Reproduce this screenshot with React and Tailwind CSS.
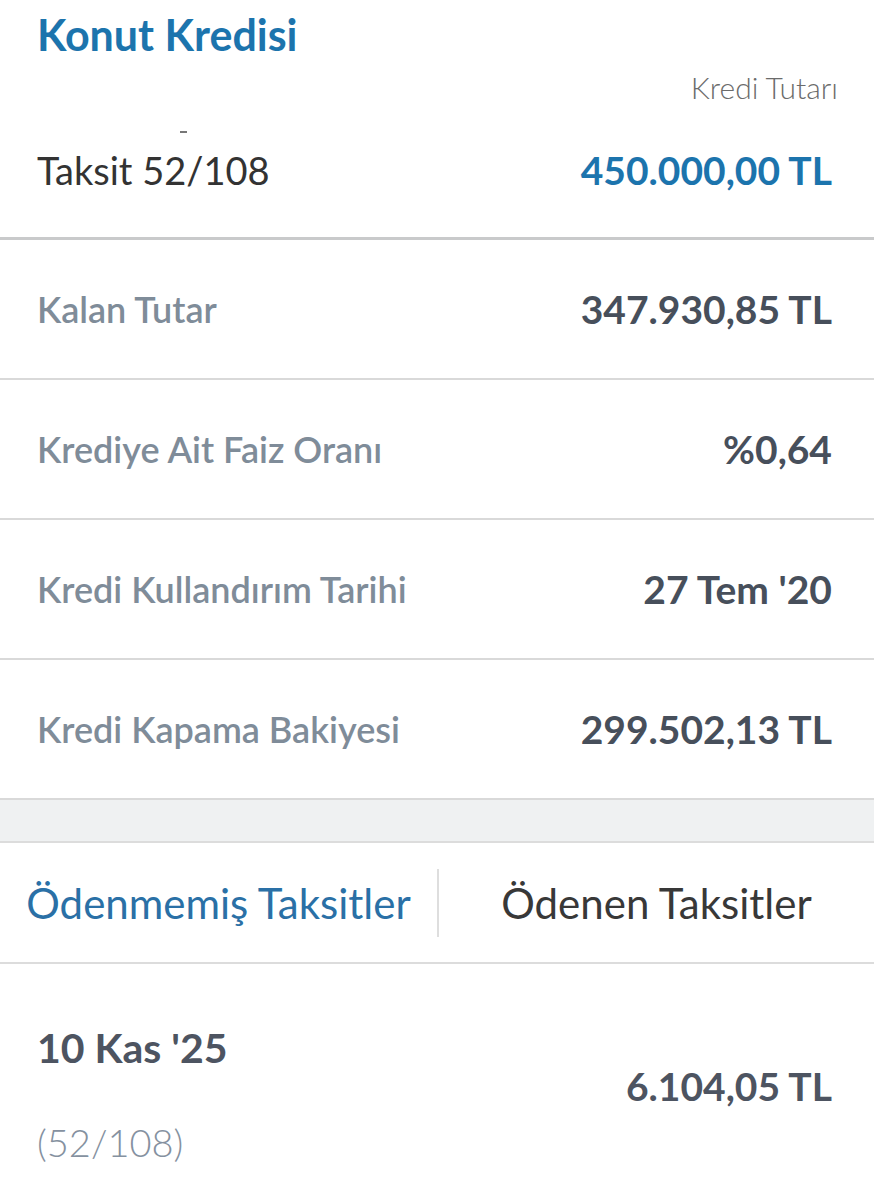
import React from "react";

const rows = [
  { label: "Kalan Tutar", value: "347.930,85 TL" },
  { label: "Krediye Ait Faiz Oranı", value: "%0,64" },
  { label: "Kredi Kullandırım Tarihi", value: "27 Tem '20" },
  { label: "Kredi Kapama Bakiyesi", value: "299.502,13 TL" },
];

const font = { fontFamily: "'Source Sans Pro', Lato, 'Noto Sans', sans-serif" };

export default function App() {
  return (
    <div className="w-[874px] h-[1200px] bg-white overflow-hidden" style={font}>
      {/* header */}
      <div className="h-[240px] border-b-[3px] border-[#c9cacb] pl-[37px] pr-[42px] relative">
        <h1 className="pt-[10px] text-[43px] leading-[50px] font-bold text-[#1c74ad]">Konut Kredisi</h1>
        <div className="mt-[9px] flex justify-end">
          <span className="text-[30px] leading-[36px] font-light text-[#6b6b6b] mr-[-6px]">Kredi Tutarı</span>
        </div>
        <div className="mt-[43px] flex items-center justify-between">
          <span className="text-[38px] leading-[44px] text-[#333333]">Taksit 52/108</span>
          <span className="text-[39px] leading-[44px] font-bold text-[#1c74ad]">450.000,00 TL</span>
        </div>
        <span className="absolute left-[180px] top-[131px] w-[7px] h-[2px] bg-[#777]" />
      </div>

      {rows.map((r) => (
        <div key={r.label} className="h-[140px] border-b-2 border-[#d9d9d9] pl-[37px] pr-[42px] flex items-center justify-between">
          <span className="text-[36px] leading-[44px] font-semibold text-[#7f8c99]">{r.label}</span>
          <span className="text-[39px] leading-[44px] font-bold text-[#474f5b]">{r.value}</span>
        </div>
      ))}

      {/* spacer band */}
      <div className="h-[43px] bg-[#eff1f2] border-b-2 border-[#dcdcdc]" />

      {/* tabs */}
      <div className="h-[121px] border-b-2 border-[#dcdcdc] flex items-center">
        <div className="w-[437px] text-center text-[42px] leading-[48px] text-[#2a70a6]">Ödenmemiş Taksitler</div>
        <div className="w-[2px] h-[68px] bg-[#dedede]" />
        <div className="flex-1 text-center text-[42px] leading-[48px] text-[#383838]">Ödenen Taksitler</div>
      </div>

      {/* installment */}
      <div className="pl-[37px] pr-[42px] pt-[61px] flex justify-between">
        <div>
          <div className="text-[41px] leading-[46px] font-bold text-[#4d5461]">10 Kas '25</div>
          <div className="mt-[48px] text-[38px] leading-[46px] font-light text-[#8591a0]">(52/108)</div>
        </div>
        <div className="pt-[38px] text-[39px] leading-[46px] font-bold text-[#4d5461]">6.104,05 TL</div>
      </div>
    </div>
  );
}
